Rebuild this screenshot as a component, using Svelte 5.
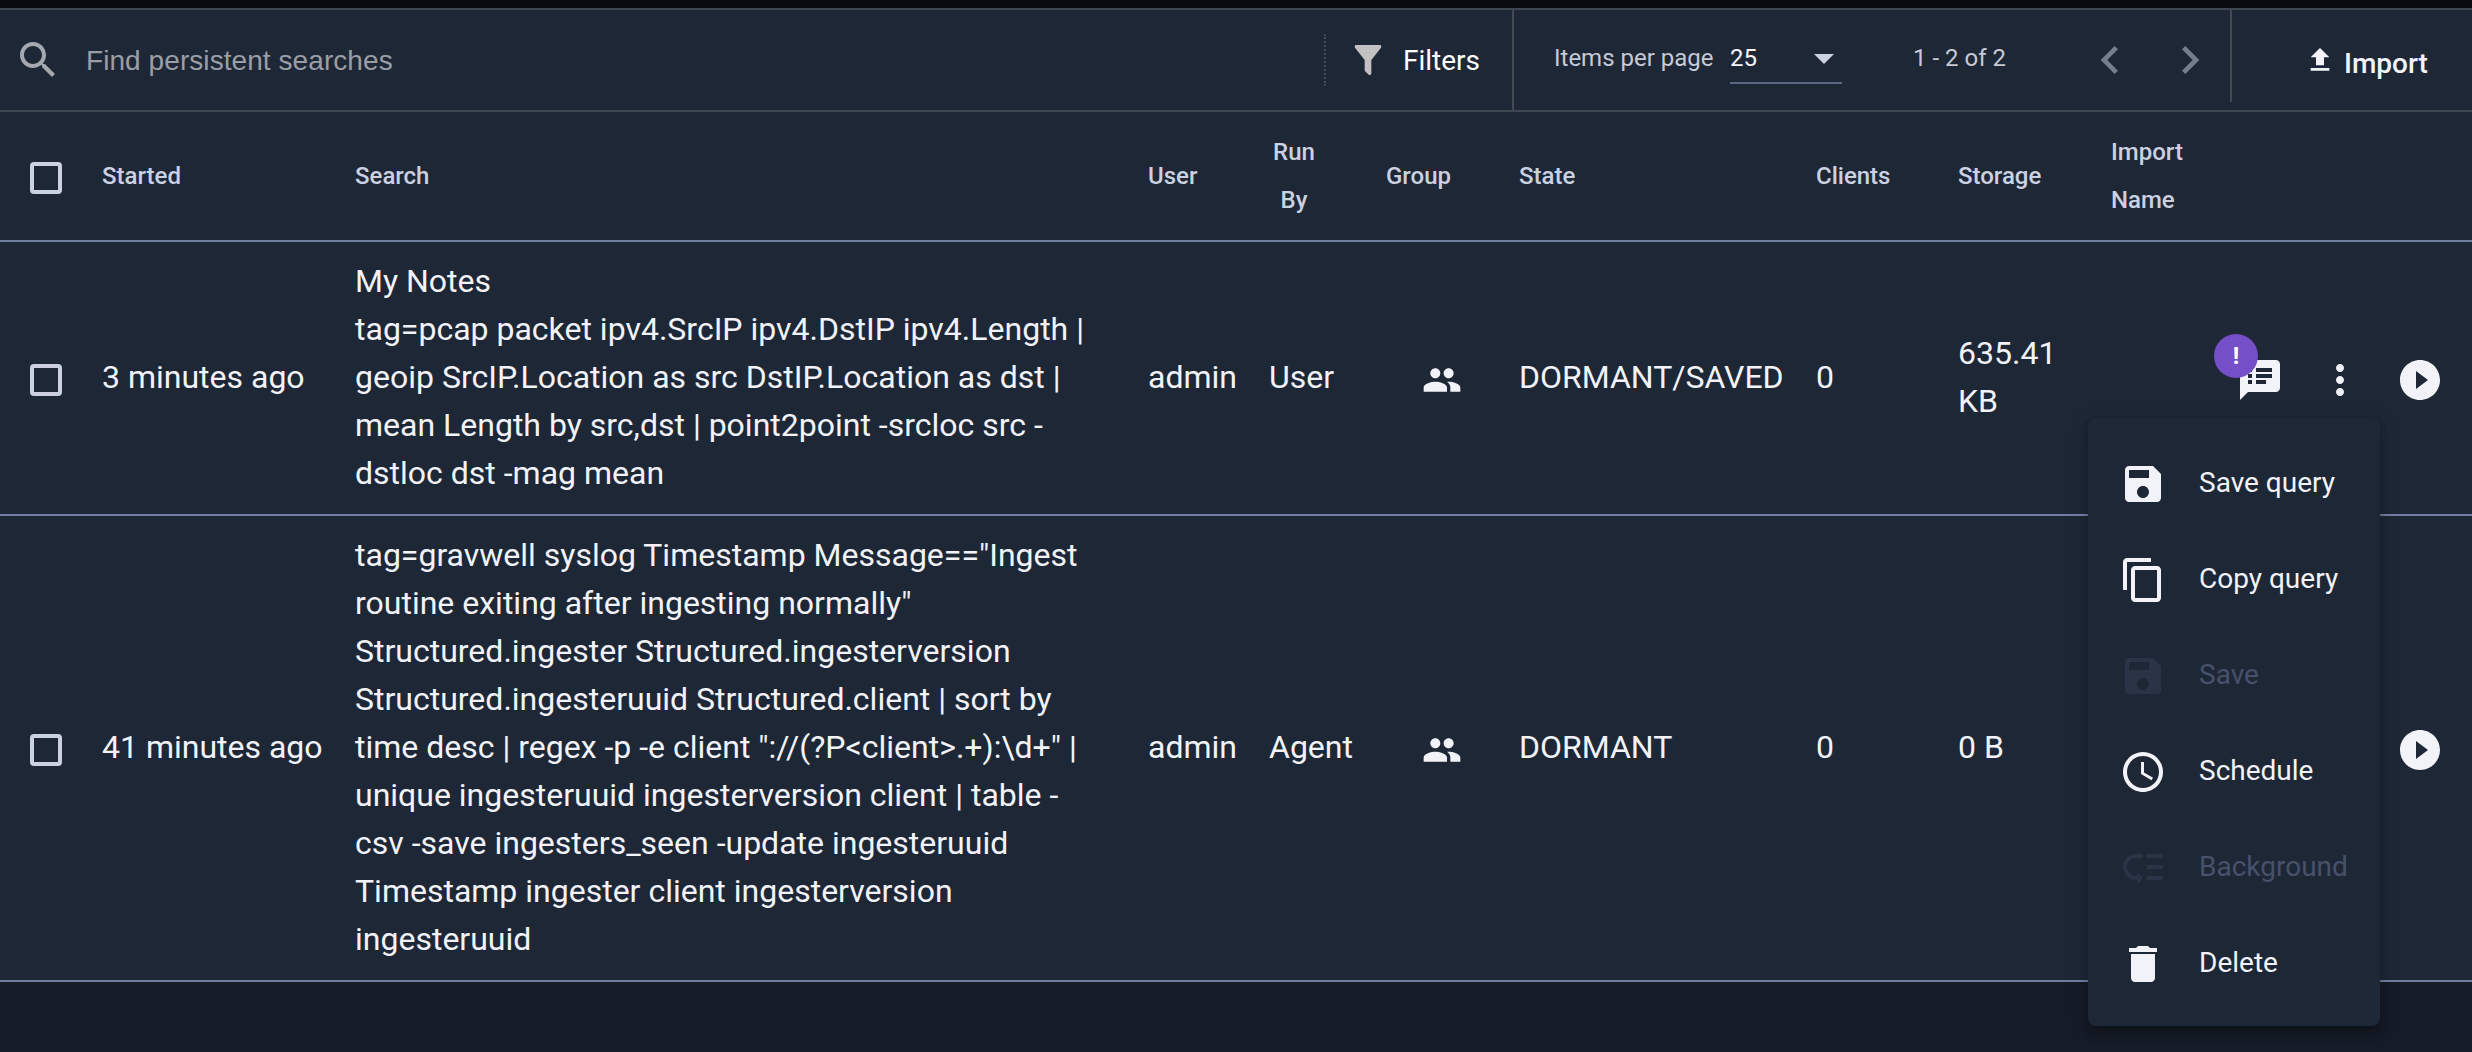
<script>
  const icons = {
    search: 'M15.5 14h-.79l-.28-.27C15.41 12.59 16 11.11 16 9.5 16 5.91 13.09 3 9.5 3S3 5.91 3 9.5 5.91 16 9.5 16c1.61 0 3.09-.59 4.23-1.57l.27.28v.79l5 4.99L20.49 19l-4.99-5zm-6 0C7.01 14 5 11.99 5 9.5S7.01 5 9.5 5 14 7.01 14 9.5 11.99 14 9.5 14z',
    filter: 'M14 12v7.88c.04.3-.06.62-.29.83a1 1 0 0 1-1.41 0l-2.01-2.01a.99.99 0 0 1-.29-.83V12h-.03L4.21 4.62a1 1 0 0 1 .17-1.4C4.57 3.08 4.78 3 5 3h14c.22 0 .43.08.62.22a1 1 0 0 1 .17 1.4L14.03 12H14z',
    left: 'M15.41 7.41L14 6l-6 6 6 6 1.41-1.41L10.83 12z',
    right: 'M10 6L8.59 7.41 13.17 12l-4.58 4.59L10 18l6-6z',
    upload: 'M9 16v-6H5l7-7 7 7h-4v6H9m-4 4v-2h14v2H5z',
    group: 'M16 11c1.66 0 2.99-1.34 2.99-3S17.66 5 16 5c-1.66 0-3 1.34-3 3s1.34 3 3 3zm-8 0c1.66 0 2.99-1.34 2.99-3S9.66 5 8 5C6.34 5 5 6.34 5 8s1.34 3 3 3zm0 2c-2.33 0-7 1.17-7 3.5V19h14v-2.5c0-2.33-4.67-3.5-7-3.5zm8 0c-.29 0-.62.02-.97.05 1.16.84 1.97 1.97 1.97 3.45V19h6v-2.5c0-2.33-4.67-3.5-7-3.5z',
    notes: 'M20 2H4c-1.1 0-1.99.9-1.99 2L2 22l4-4h14c1.1 0 2-.9 2-2V4c0-1.1-.9-2-2-2zM8 14H6v-2h2v2zm0-3H6V9h2v2zm0-3H6V6h2v2zm7 6h-5v-2h5v2zm3-3h-8V9h8v2zm0-3h-8V6h8v2z',
    more: 'M12 8c1.1 0 2-.9 2-2s-.9-2-2-2-2 .9-2 2 .9 2 2 2zm0 2c-1.1 0-2 .9-2 2s.9 2 2 2 2-.9 2-2-.9-2-2-2zm0 6c-1.1 0-2 .9-2 2s.9 2 2 2 2-.9 2-2-.9-2-2-2z',
    play: 'M12 2C6.48 2 2 6.48 2 12s4.48 10 10 10 10-4.48 10-10S17.52 2 12 2zm-2 14.5v-9l6 4.5-6 4.5z',
    save: 'M17 3H5c-1.11 0-2 .9-2 2v14c0 1.1.89 2 2 2h14c1.1 0 2-.9 2-2V7l-4-4zm-5 16c-1.66 0-3-1.34-3-3s1.34-3 3-3 3 1.34 3 3-1.34 3-3 3zm3-10H5V5h10v4z',
    copy: 'M16 1H4c-1.1 0-2 .9-2 2v14h2V3h12V1zm3 4H8c-1.1 0-2 .9-2 2v14c0 1.1.9 2 2 2h11c1.1 0 2-.9 2-2V7c0-1.1-.9-2-2-2zm0 16H8V7h11v14z',
    schedule: 'M11.99 2C6.47 2 2 6.48 2 12s4.47 10 9.99 10C17.52 22 22 17.52 22 12S17.52 2 11.99 2zM12 20c-4.42 0-8-3.58-8-8s3.58-8 8-8 8 3.58 8 8-3.58 8-8 8zm.5-13H11v6l5.25 3.15.75-1.23-4.5-2.67z',
    background: 'M14 5h8v2h-8zm0 5.5h8v2h-8zm0 5.5h8v2h-8zM2 11.5C2 15.08 4.92 18 8.5 18H9v2l3-3-3-3v2h-.5C6.02 16 4 13.98 4 11.5S6.02 7 8.5 7H12V5H8.5C4.92 5 2 7.92 2 11.5z',
    remove: 'M6 19c0 1.1.9 2 2 2h8c1.1 0 2-.9 2-2V7H6v12zM19 4h-3.5l-1-1h-5l-1 1H5v2h14V4z'
  };

  const rows = [
    {
      started: '3 minutes ago',
      title: 'My Notes',
      query: 'tag=pcap packet ipv4.SrcIP ipv4.DstIP ipv4.Length | geoip SrcIP.Location as src DstIP.Location as dst | mean Length by src,dst | point2point -srcloc src -dstloc dst -mag mean',
      user: 'admin', runBy: 'User', state: 'DORMANT/SAVED', clients: 0, storage: '635.41 KB', notes: true
    },
    {
      started: '41 minutes ago',
      query: 'tag=gravwell syslog Timestamp Message=="Ingest routine exiting after ingesting normally" Structured.ingester Structured.ingesterversion Structured.ingesteruuid Structured.client | sort by time desc | regex -p -e client "://(?P<client>.+):\\d+" | unique ingesteruuid ingesterversion client | table -csv -save ingesters_seen -update ingesteruuid Timestamp ingester client ingesterversion ingesteruuid',
      user: 'admin', runBy: 'Agent', state: 'DORMANT', clients: 0, storage: '0 B', notes: false
    }
  ];

  const menu = [
    { icon: 'save', label: 'Save query' },
    { icon: 'copy', label: 'Copy query' },
    { icon: 'save', label: 'Save', disabled: true },
    { icon: 'schedule', label: 'Schedule' },
    { icon: 'background', label: 'Background', disabled: true },
    { icon: 'remove', label: 'Delete' }
  ];
</script>

{#snippet icon(name, cls = '')}
  <svg class="icon {cls}" viewBox="0 0 24 24" aria-hidden="true"><path d={icons[name]} /></svg>
{/snippet}

<main class="page">
  <header class="toolbar">
    <div class="find">
      {@render icon('search', 'search-icon')}
      <span>Find persistent searches</span>
    </div>
    <div class="filters">
      {@render icon('filter', 'filter-icon')}
      <span>Filters</span>
    </div>
    <div class="paginator">
      <span class="per-page">Items per page</span>
      <div class="select"><span>25</span><i class="caret"></i></div>
      <span class="range">1 - 2 of 2</span>
      <div class="pager">
        {@render icon('left', 'chevron')}
        {@render icon('right', 'chevron')}
      </div>
    </div>
    <div class="import">
      {@render icon('upload', 'upload-icon')}
      <span>Import</span>
    </div>
  </header>

  <section class="table">
    <div class="row head">
      <div class="check"><i class="box"></i></div>
      <div>Started</div>
      <div>Search</div>
      <div>User</div>
      <div class="run-by">Run By</div>
      <div>Group</div>
      <div>State</div>
      <div>Clients</div>
      <div>Storage</div>
      <div class="import-name">Import Name</div>
      <div></div>
    </div>

    {#each rows as row}
      <div class="row body">
        <div class="check"><i class="box"></i></div>
        <div>{row.started}</div>
        <div class="query">
          {#if row.title}<p>{row.title}</p>{/if}
          <p>{row.query}</p>
        </div>
        <div>{row.user}</div>
        <div>{row.runBy}</div>
        <div class="group">{@render icon('group', 'group-icon')}</div>
        <div>{row.state}</div>
        <div>{row.clients}</div>
        <div class="storage">{row.storage}</div>
        <div></div>
        <div class="actions">
          {#if row.notes}
            <span class="noted">
              {@render icon('notes')}
              <b class="badge">!</b>
            </span>
          {/if}
          {@render icon('more')}
          {@render icon('play')}
        </div>
      </div>
    {/each}
  </section>

  <nav class="menu">
    {#each menu as item}
      <div class="item" class:disabled={item.disabled}>
        {@render icon(item.icon)}
        <span>{item.label}</span>
      </div>
    {/each}
  </nav>
</main>

<style>
  :global(body) {
    background: #151b27;
  }
  .page {
    position: relative;
    box-sizing: border-box;
    height: 1052px;
    overflow: hidden;
    border-top: 8px solid #080b10;
    background: #151b27;
    color: #f2f3f8;
    font-family: Roboto, sans-serif;
    font-size: 32px;
    line-height: 48px;
  }
  .icon {
    display: block;
    flex: none;
    width: 48px;
    height: 48px;
    fill: #f2f3f8;
  }

  .toolbar {
    display: flex;
    box-sizing: border-box;
    height: 104px;
    border-top: 2px solid #3e454e;
    border-bottom: 2px solid #3e454e;
    background: #1e2736;
    font-size: 28px;
  }
  .find {
    display: flex;
    flex: 1;
    align-items: center;
    gap: 24px;
    padding-left: 14px;
    color: #9a9ea6;
    font-family: "Liberation Sans", Arial, sans-serif;
    letter-spacing: 0.07px;
  }
  .find span,
  .filters span {
    padding-top: 2px;
  }
  .icon.search-icon {
    fill: #a5a8ae;
  }
  .filters {
    display: flex;
    align-items: center;
    gap: 15px;
    box-sizing: border-box;
    width: 188px;
    height: 52px;
    margin-top: 24px;
    padding-left: 22px;
    border-left: 2px dotted #434a54;
    color: #fff;
  }
  .icon.filter-icon {
    width: 40px;
    height: 40px;
    fill: #c1c1c1;
  }
  .paginator {
    display: flex;
    align-items: flex-start;
    box-sizing: border-box;
    width: 718px;
    padding: 24px 0 0 40px;
    border-left: 2px solid #434a54;
    color: #c5cad6;
    font-size: 24px;
  }
  .per-page {
    width: 174px;
  }
  .select {
    display: flex;
    justify-content: space-between;
    box-sizing: border-box;
    width: 112px;
    height: 50px;
    margin-left: 2px;
    padding-right: 8px;
    border-bottom: 2px solid #5a6983;
    color: #f5f6fa;
  }
  .caret {
    width: 0;
    height: 0;
    margin-top: 20px;
    border: 10px solid transparent;
    border-top-color: #cbd1e0;
    border-bottom: 0;
  }
  .range {
    width: 169px;
    margin-left: 71px;
  }
  .pager {
    display: flex;
    gap: 24px;
    margin-top: -2px;
  }
  .icon.chevron {
    width: 56px;
    height: 56px;
    fill: #777e8b;
  }
  .import {
    display: flex;
    gap: 8px;
    box-sizing: border-box;
    width: 242px;
    height: 92px;
    padding: 34px 0 0 72px;
    border-left: 2px solid #434a54;
    font-weight: 500;
  }
  .import span {
    padding-top: 3px;
    line-height: 34px;
  }
  .icon.upload-icon {
    width: 32px;
    height: 32px;
  }

  .row {
    display: grid;
    grid-template-columns: 101px 253px 793px 121px 117px 133px 297px 142px 153px 100px 1fr;
    align-items: center;
    padding: 16px 0 16px 1px;
    border-bottom: 2px solid #717f9f;
    background: #1e2736;
  }
  .row.head {
    color: #cbd1e0;
    font-size: 24px;
    font-weight: 500;
  }
  /* text sits slightly above the row's centre line, icons slightly below it */
  .row.body {
    padding-top: 15px;
    padding-bottom: 17px;
  }
  .check {
    padding: 4px 0 0 29px;
  }
  .row.body .check {
    padding-top: 6px;
  }
  .box {
    display: block;
    box-sizing: border-box;
    width: 32px;
    height: 32px;
    border: 4px solid #cbd1e0;
    border-radius: 4px;
  }
  .query {
    width: 731px;
  }
  .query p {
    margin: 0;
  }
  .run-by {
    width: 50px;
    text-align: center;
  }
  .storage {
    width: 110px;
  }
  .import-name {
    width: 80px;
  }
  .group {
    padding: 5px 0 0 36px;
  }
  .icon.group-icon {
    width: 40px;
    height: 40px;
  }
  .actions {
    display: flex;
    justify-content: flex-end;
    gap: 32px;
    padding: 6px 28px 0 0;
  }
  .noted {
    position: relative;
  }
  .badge {
    position: absolute;
    top: -22px;
    left: -22px;
    width: 44px;
    height: 44px;
    border-radius: 50%;
    background: #754fc8;
    color: #fff;
    font-size: 24px;
    line-height: 44px;
    text-align: center;
  }

  .menu {
    position: absolute;
    top: 410px;
    left: 2088px;
    box-sizing: border-box;
    width: 292px;
    padding: 16px 0;
    border-radius: 8px;
    background: #1e2736;
    box-shadow: 0 4px 8px -2px rgba(0, 0, 0, 0.2), 0 8px 10px rgba(0, 0, 0, 0.14), 0 2px 20px rgba(0, 0, 0, 0.12);
    font-size: 28px;
  }
  .item {
    display: flex;
    align-items: center;
    gap: 32px;
    box-sizing: border-box;
    height: 96px;
    padding-left: 31px;
  }
  .item .icon {
    margin-top: 4px;
  }
  .item span {
    padding-top: 2px;
  }
  .item.disabled {
    color: #46516a;
  }
  .item.disabled .icon {
    fill: #2a3446;
  }
</style>
